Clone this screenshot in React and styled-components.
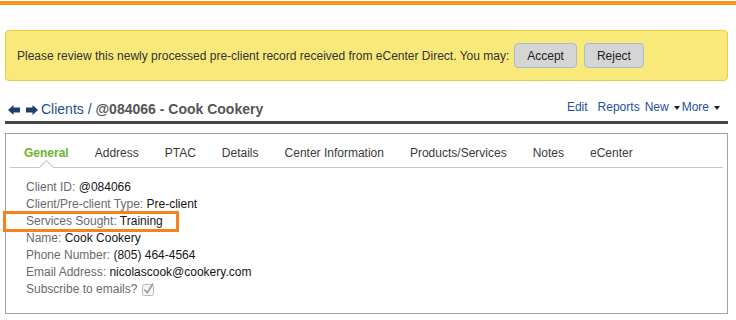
import React from "react";
import styled, { createGlobalStyle } from "styled-components";

const GlobalStyle = createGlobalStyle`
  html, body { margin: 0; padding: 0; background: #fff; }
  body { font-family: "Liberation Sans", Arial, Helvetica, sans-serif; color: #333; }
  * { box-sizing: border-box; }
`;

const Page = styled.div`
  display: flex;
  flex-direction: column;
`;

const TopBar = styled.div`
  height: 4px;
  margin-top: 1px;
  background: #f7931e;
`;

const Main = styled.div`
  padding: 0 8px 0 5px;
  display: flex;
  flex-direction: column;
`;

const Alert = styled.div`
  margin-top: 25px;
  height: 51px;
  display: flex;
  align-items: center;
  padding: 0 11px;
  background: #f8e97a;
  border: 1px solid #f0ca40;
  border-radius: 4px;
  font-size: 12px;
  color: #333;
`;

const AlertText = styled.span`
  margin-right: 5px;
  white-space: nowrap;
`;

const Buttons = styled.div`
  display: flex;
  gap: 7px;
`;

const Button = styled.button`
  height: 25px;
  padding: 0 12px;
  font: inherit;
  font-size: 12px;
  color: #222;
  background: #d5d5d5;
  border: 1px solid #a9bccb;
  border-radius: 4px;
`;

const Header = styled.div`
  margin-top: 20px;
  display: flex;
  justify-content: space-between;
  align-items: flex-start;
  padding: 0 6px 0 3px;
`;

const Crumbs = styled.div`
  display: flex;
  align-items: center;
  font-size: 14px;
  line-height: 17px;
`;

const NavArrow = styled.svg`
  display: block;
  margin-right: ${(p) => p.$gap}px;
`;

const CrumbLink = styled.span`
  color: #1d4e8f;
  white-space: pre;
`;

const CrumbTitle = styled.span`
  color: #555;
  font-weight: bold;
`;

const Links = styled.div`
  display: flex;
  align-items: center;
  font-size: 12px;
  line-height: 17px;
  margin-top: -2px;
  color: #1f4f9e;
`;

const LinkItem = styled.span`
  margin-left: ${(p) => p.$gap}px;
  display: inline-flex;
  align-items: center;
`;

const Caret = styled.span`
  display: inline-block;
  width: 0;
  height: 0;
  border-left: 3.5px solid transparent;
  border-right: 3.5px solid transparent;
  border-top: 4px solid #222;
  margin: 0 2px 0 5px;
`;

const Rule = styled.div`
  margin-top: 3px;
  height: 3px;
  background: #474747;
`;

const Panel = styled.div`
  margin-top: 9px;
  border: 1px solid #a3a3a3;
`;

const TabBar = styled.div`
  display: flex;
  margin: 0 4px;
  padding: 11px 0 0 1px;
  border-bottom: 1px solid #c6c6c6;
`;

const Tab = styled.div`
  position: relative;
  padding: 0 13px 5px;
  font-size: 12px;
  line-height: 17px;
  white-space: nowrap;
  color: ${(p) => (p.$active ? "#6fb22c" : "#3a3a3a")};
  font-weight: ${(p) => (p.$active ? "bold" : "normal")};

  ${(p) =>
    p.$active &&
    `
    &::after {
      content: "";
      position: absolute;
      left: 50%;
      bottom: -5.5px;
      width: 10px;
      height: 10px;
      margin-left: -5px;
      background: #fff;
      border-top: 1px solid #c6c6c6;
      border-left: 1px solid #c6c6c6;
      transform: rotate(45deg);
    }
  `}
`;

const Fields = styled.div`
  padding: 11px 20px 15px;
  font-size: 12px;
  line-height: 17px;
`;

const Row = styled.div`
  position: relative;
  height: 17px;
  white-space: nowrap;
`;

const Label = styled.span`
  color: #6a6a6a;
`;

const Value = styled.span`
  color: #161616;
`;

const Highlight = styled.div`
  position: absolute;
  left: -23px;
  top: -2px;
  width: 176px;
  height: 21px;
  border: 3px solid #f7821b;
  pointer-events: none;
`;

const CheckIcon = styled.svg`
  display: inline-block;
  vertical-align: -3px;
  margin-left: 5px;
`;

const ArrowLeft = () => (
  <NavArrow $gap={6} width="12" height="10" viewBox="0 0 12 10">
    <path d="M0 5 L5.5 0 L5.5 2.6 L12 2.6 L12 7.4 L5.5 7.4 L5.5 10 Z" fill="#1c3f6e" />
  </NavArrow>
);

const ArrowRight = () => (
  <NavArrow $gap={3} width="12" height="10" viewBox="0 0 12 10">
    <path d="M12 5 L6.5 0 L6.5 2.6 L0 2.6 L0 7.4 L6.5 7.4 L6.5 10 Z" fill="#1c3f6e" />
  </NavArrow>
);

const Checkbox = () => (
  <CheckIcon width="13" height="13" viewBox="0 0 13 13">
    <rect x="0.5" y="1.5" width="11" height="11" rx="2" fill="#f4f4f4" stroke="#b8b8b8" />
    <path d="M2.8 7 L5.2 9.8 L10.6 1.2" fill="none" stroke="#9a9a9a" strokeWidth="1.6" strokeLinecap="round" strokeLinejoin="round" />
  </CheckIcon>
);

const tabs = [
  "General",
  "Address",
  "PTAC",
  "Details",
  "Center Information",
  "Products/Services",
  "Notes",
  "eCenter",
];

const fields = [
  ["Client ID:", "@084066"],
  ["Client/Pre-client Type:", "Pre-client"],
  ["Services Sought:", "Training", true],
  ["Name:", "Cook Cookery"],
  ["Phone Number:", "(805) 464-4564"],
  ["Email Address:", "nicolascook@cookery.com"],
];

export default function App() {
  return (
    <Page>
      <GlobalStyle />
      <TopBar />
      <Main>
        <Alert>
          <AlertText>
            Please review this newly processed pre-client record received from eCenter Direct. You may:
          </AlertText>
          <Buttons>
            <Button>Accept</Button>
            <Button>Reject</Button>
          </Buttons>
        </Alert>

        <Header>
          <Crumbs>
            <ArrowLeft />
            <ArrowRight />
            <CrumbLink>Clients / </CrumbLink>
            <CrumbTitle>@084066 - Cook Cookery</CrumbTitle>
          </Crumbs>
          <Links>
            <LinkItem $gap={0}>Edit</LinkItem>
            <LinkItem $gap={10}>Reports</LinkItem>
            <LinkItem $gap={5}>
              New
              <Caret />
            </LinkItem>
            <LinkItem $gap={0}>
              More
              <Caret />
            </LinkItem>
          </Links>
        </Header>
        <Rule />

        <Panel>
          <TabBar>
            {tabs.map((t, i) => (
              <Tab key={t} $active={i === 0}>
                {t}
              </Tab>
            ))}
          </TabBar>
          <Fields>
            {fields.map(([label, value, hl]) => (
              <Row key={label}>
                {hl && <Highlight />}
                <Label>{label}</Label> <Value>{value}</Value>
              </Row>
            ))}
            <Row>
              <Label>Subscribe to emails?</Label>
              <Checkbox />
            </Row>
          </Fields>
        </Panel>
      </Main>
    </Page>
  );
}
